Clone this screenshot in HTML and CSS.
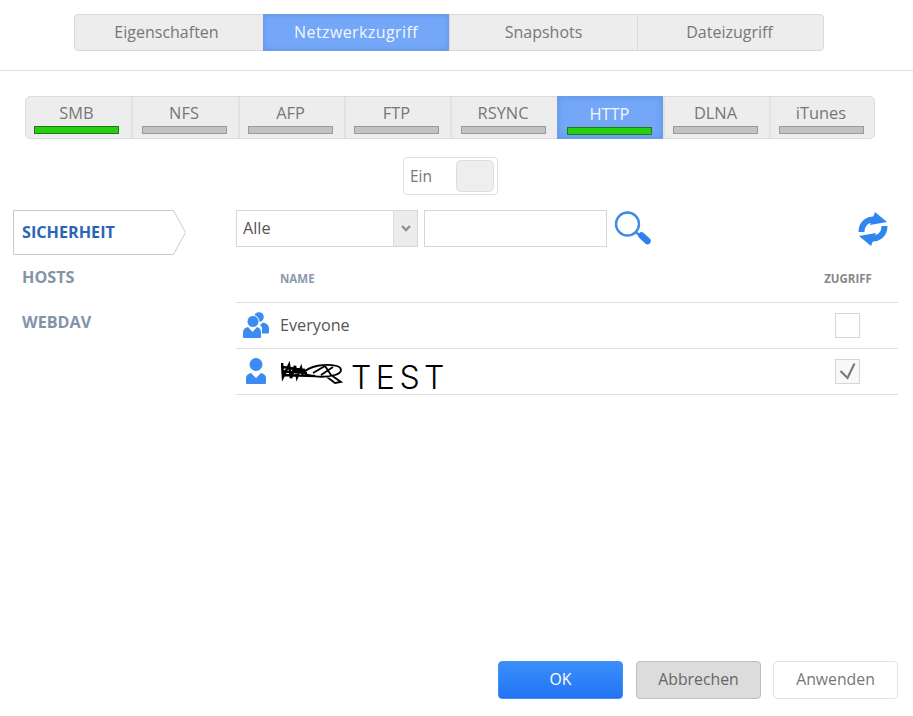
FILE: index.html
```html
<!DOCTYPE html>
<html lang="de">
<head>
    <meta charset="UTF-8">
    <meta name="viewport" content="width=device-width, initial-scale=1.0">
    <title>Netzwerkzugriff</title>
    <link rel="stylesheet" href="styles.css">
</head>
<body>
    <div class="page">
        <div class="top-bar">
            <div class="tabs">
                <div class="tab">Eigenschaften</div>
                <div class="tab active">Netzwerkzugriff</div>
                <div class="tab">Snapshots</div>
                <div class="tab">Dateizugriff</div>
            </div>
        </div>

        <div class="services">
            <div class="service"><span>SMB</span><i class="lamp on"></i></div>
            <div class="service"><span>NFS</span><i class="lamp"></i></div>
            <div class="service"><span>AFP</span><i class="lamp"></i></div>
            <div class="service"><span>FTP</span><i class="lamp"></i></div>
            <div class="service"><span>RSYNC</span><i class="lamp"></i></div>
            <div class="service active"><span>HTTP</span><i class="lamp on"></i></div>
            <div class="service"><span>DLNA</span><i class="lamp"></i></div>
            <div class="service"><span>iTunes</span><i class="lamp"></i></div>
        </div>

        <div class="toggle-row">
            <div class="toggle"><span>Ein</span><i class="thumb"></i></div>
        </div>

        <div class="content">
            <div class="sidebar">
                <div class="side-item active">
                    <svg class="side-arrow" width="173" height="45" viewBox="0 0 173 45">
                        <path d="M0.5 0.5H160.5L172.5 22.5L160.5 44.5H0.5Z" fill="#fff" stroke="#c8ccd2"/>
                    </svg>
                    <span>SICHERHEIT</span>
                </div>
                <div class="side-item">HOSTS</div>
                <div class="side-item">WEBDAV</div>
            </div>

            <div class="main">
                <div class="filters">
                    <div class="select"><span>Alle</span>
                        <div class="select-arrow">
                            <svg width="10" height="7" viewBox="0 0 10 7"><path d="M1 1L5 5L9 1" fill="none" stroke="#8b9098" stroke-width="2.400"/></svg>
                        </div>
                    </div>
                    <div class="search-box"></div>
                    <svg class="search-icon" width="37" height="37" viewBox="0 0 37 37">
                        <circle cx="13.500" cy="13" r="11.500" fill="none" stroke="#3f8be6" stroke-width="2.400"/>
                        <path d="M21.500 21L28 26" stroke="#3f8be6" stroke-width="2.500"/>
                        <path d="M27.500 24.500L33.500 30" stroke="#2f80ed" stroke-width="6.500" stroke-linecap="round"/>
                    </svg>
                    <svg class="refresh-icon" width="30" height="36" viewBox="0 0 30 36">
                        <path d="M3.500 21C3.500 12 10.500 7 18.500 9" fill="none" stroke="#2f86f0" stroke-width="6"/>
                        <path d="M17 1L29 11L12 14Z" fill="#2f86f0"/>
                        <path d="M26.500 15C26.500 24 19.500 29 11.500 27" fill="none" stroke="#2f86f0" stroke-width="6"/>
                        <path d="M13 35L1 25L18 22Z" fill="#2f86f0"/>
                    </svg>
                </div>

                <table class="users">
                    <thead>
                        <tr><th class="col-icon"></th><th>NAME</th><th class="col-access">ZUGRIFF</th></tr>
                    </thead>
                    <tbody>
                        <tr>
                            <td class="col-icon">
                                <svg width="26" height="26" viewBox="0 0 26 26" fill="#3a8bf2">
                                    <circle cx="16" cy="5" r="4.800"/>
                                    <path d="M19.500 10.500C23.500 11 26 13 26 16.500V20C26 21 25.500 21.500 24.500 21.500H19V17C19 15 18 13.500 16.500 13C18 12.500 19 11.500 19.500 10.500Z"/>
                                    <circle cx="10" cy="9.500" r="6" stroke="#fff" stroke-width="1"/>
                                    <path d="M1 26C0.500 26 0 25.500 0 25V20.500C0 17.500 2 15.500 5 15L9.500 20L14 15C16.500 15.500 18 17.500 18 20.500V25C18 25.500 17.500 26 17 26Z"/>
                                </svg>
                            </td>
                            <td>Everyone</td>
                            <td class="col-access"><div class="check"></div></td>
                        </tr>
                        <tr>
                            <td class="col-icon">
                                <svg class="user-one" width="22" height="26" viewBox="0 0 22 26" fill="#3a8bf2">
                                    <circle cx="11" cy="6.500" r="6.500"/>
                                    <path d="M2 26C1.500 26 1 25.500 1 25V20C1 17.500 3 15.500 6 15L11 20L16 15C19 15.500 21 17.500 21 20V25C21 25.500 20.500 26 20 26Z"/>
                                </svg>
                            </td>
                            <td>
                                <div class="scrawl-cell">
                                    <svg class="scrawl" width="62" height="24" viewBox="0 0 62 24">
                                        <path d="M1 2L2 16L8 4L10 17L14 5L16 16L20 7L22 16M1 6L24 9M1 10L26 12M2 14L34 15" fill="none" stroke="#000" stroke-width="2.600"/>
                                        <path d="M22 12C28 5 44 2 56 5C62 7 61 12 54 14C44 17 30 16 22 12ZM32 12L44 5L50 14M40 14L52 6M50 14L60 21L54 22L46 16" fill="none" stroke="#000" stroke-width="1.800"/>
                                    </svg>
                                    <span class="scrawl-text">TEST</span>
                                </div>
                            </td>
                            <td class="col-access">
                                <div class="check checked">
                                    <svg width="23" height="23" viewBox="0 0 23 23"><path d="M4.500 11L11.500 18L18.500 3.500" fill="none" stroke="#767c84" stroke-width="2.200"/></svg>
                                </div>
                            </td>
                        </tr>
                    </tbody>
                </table>
            </div>
        </div>

        <div class="footer">
            <div class="btn btn-primary">OK</div>
            <div class="btn btn-cancel">Abbrechen</div>
            <div class="btn btn-apply">Anwenden</div>
        </div>
    </div>
</body>
</html>
```
FILE: styles.css
```css
* { margin: 0; padding: 0; box-sizing: border-box; }
body {
    font-family: 'Open Sans', 'Noto Sans', sans-serif;
    background: white; color: #777;
}
.page { height: 716px; display: flex; flex-direction: column; overflow: hidden; }

.top-bar { height: 71px; padding: 14px 89px 0 74px; border-bottom: 1px solid #e0e0e0; }
.tabs {
    display: grid; grid-template-columns: 188px 186px 188px 186px; height: 37px;
    background: #ededed; border: 1px solid #d9d9d9; border-radius: 4px;
}
.tab {
    display: flex; align-items: center; justify-content: center; padding-bottom: 2px;
    font-size: 16px; border-left: 1px solid #dadada;
}
.tab:first-child { border-left: none; padding-right: 5px; }
.tab:last-child { padding-right: 2px; }
.tab.active {
    background: #74a7f8; color: #f2f7ff; margin: -1px 0; letter-spacing: 0.4px;
    border: 1px solid #6b9de8; box-shadow: inset 0 0 5px #5c93e8;
}

.services {
    display: grid; grid-template-columns: 105px 107px 106px 106px 107px 106px 106px 105px;
    height: 43px; margin: 25px 38px 0 25px;
    background: #ededed; border: 1px solid #dcdcdc; border-radius: 5px;
}
.service {
    display: flex; flex-direction: column; align-items: center;
    border-left: 2px solid #e2e2e2; padding: 6px 3px 0 0; font-size: 16.400px;
}
.service:first-child { border-left: none; padding-right: 4px; }
.service span { height: 23px; line-height: 20px; }
.service.active {
    background: #74a7f8; color: #f2f7ff; margin: -1px 0; padding: 7px 1px 0 0;
    border: 1px solid #6b9de8; box-shadow: inset 0 0 6px #5c93e8;
}
.lamp { display: block; width: 85px; height: 8px; background: #c2c2c2; border: 1px solid #9a9a9a; }
.lamp.on { background: #27cf10; border-color: #1f7a1a; }

.toggle-row { display: flex; justify-content: center; margin-top: 18px; padding-right: 12px; }
.toggle {
    width: 95px; height: 38px; display: flex; align-items: center; justify-content: space-between;
    padding: 0 3px 0 6px; border: 1px solid #dedede; border-radius: 4px; font-size: 15.500px;
}
.thumb { width: 38px; height: 32px; background: #eeeeee; border: 1px solid #dddddd; border-radius: 5px; }

.content { display: flex; margin-top: 15px; padding: 0 15px 0 13px; }
.sidebar { width: 223px; flex-shrink: 0; font-size: 16.200px; font-weight: 700; color: #8494a8; }
.side-item { height: 45px; padding: 0 0 2px 9px; display: flex; align-items: center; position: relative; }
.side-item.active { color: #2a66b5; }
.side-item span { position: relative; }
.side-arrow { position: absolute; left: 0; top: 0; }

.main { flex: 1; min-width: 0; }
.filters { display: flex; align-items: flex-start; }
.select {
    width: 182px; height: 37px; display: flex; align-items: center; justify-content: space-between;
    border: 1px solid #d6d6d6; padding-left: 6px; font-size: 16.200px; color: #555;
}
.select span { padding-bottom: 2px; }
.select-arrow {
    width: 24px; height: 35px; background: #ececec; border-left: 1px solid #dcdcdc;
    display: flex; align-items: center; justify-content: center;
}
.search-box { width: 183px; height: 37px; margin-left: 6px; border: 1px solid #d6d6d6; }
.search-icon { margin: 1px 0 0 7px; }
.refresh-icon { margin: 1px 10px 0 auto; }

.users { width: 100%; border-collapse: collapse; margin-top: 17px; }
.users th {
    height: 37px; text-align: left; font-size: 11.500px; font-weight: 700; color: #8a99ad;
    border-bottom: 1px solid #dedede; padding: 0 0 10px;
}
.users td { height: 46px; font-size: 16.200px; color: #555; border-bottom: 1px solid #dedede; padding: 0; }
.users th.col-access { color: #888; text-align: center; }
.col-icon { width: 44px; }
.col-icon svg { display: block; margin: 0 0 0 7px; }
.col-icon .user-one { margin-left: 9px; margin-top: -1px; }
.col-access { width: 100px; }
.check { width: 25px; height: 25px; border: 1px solid #d6d6d6; margin: 0 38px 0 auto; }
.check.checked { background: #f8f8f8; }
.check svg { display: block; }

.scrawl-cell { display: flex; align-items: center; }
.scrawl { flex-shrink: 0; margin: 3px 0 0 1px; }
.scrawl-text {
    margin: 14px 0 0 8px; font-family: 'Inter', sans-serif; font-weight: 300;
    font-size: 32px; line-height: 26px; letter-spacing: 4.500px; color: #000;
}

.footer { display: flex; justify-content: flex-end; gap: 12px; margin-top: auto; padding: 0 15px 17px 0; }
.btn {
    width: 125px; height: 38px; display: flex; align-items: center; justify-content: center;
    border-radius: 4px; font-size: 15.800px; padding-bottom: 2px;
}
.btn-primary { background: linear-gradient(#3b8ffb, #2273f4); color: white; border: 1px solid #3b8ffb; margin-right: 1px; }
.btn-cancel { background: #dcdcdc; border: 1px solid #bdbdbd; color: #666; }
.btn-apply { background: white; border: 1px solid #e2e2e2; color: #777; }
```
